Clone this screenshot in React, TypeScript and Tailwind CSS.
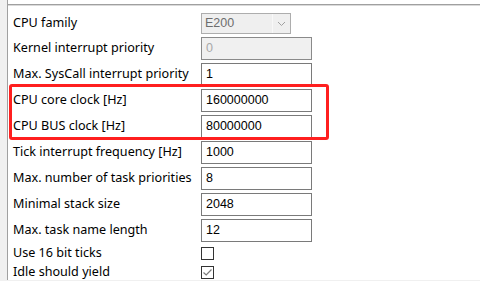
import React from "react";

const labelFont = { fontFamily: '"Noto Sans", "Liberation Sans", sans-serif' };
const inputFont = { fontFamily: '"Liberation Sans", Arial, sans-serif' };

function Row({ label, children, h = "h-[23px]" }: { label: string; children: React.ReactNode; h?: string }) {
  return (
    <div className={`flex items-center shrink-0 ${h}`}>
      <div className="w-[188px] shrink-0 text-[12.6px] leading-none text-black whitespace-nowrap" style={labelFont}>
        {label}
      </div>
      {children}
    </div>
  );
}

function Input({ value, disabled }: { value: string; disabled?: boolean }) {
  return (
    <div
      className={`w-[111px] h-[23px] border flex items-center pl-[4px] text-[12.5px] leading-none ${
        disabled ? "bg-[#f0f0f0] text-[#a8a8a8] border-[#8a8a8a]" : "bg-white text-black border-[#7a7a7a]"
      }`}
      style={inputFont}
    >
      {value}
    </div>
  );
}

function Check({ checked }: { checked?: boolean }) {
  return (
    <div className="w-[13px] h-[13px] border border-[#333333] bg-white flex items-center justify-center">
      {checked && (
        <svg width="11" height="11" viewBox="0 0 11 11">
          <path d="M1.5 5.5 L4.2 8 L9.5 2.5" fill="none" stroke="#7a7a7a" strokeWidth="1.2" />
        </svg>
      )}
    </div>
  );
}

export default function App() {
  return (
    <div className="w-[480px] h-[281px] bg-white flex flex-col overflow-hidden">
      <div className="flex h-[280px] shrink-0 overflow-hidden">
        <div className="w-[8px] shrink-0 bg-[#f0f0f0] border-r border-[#a0a0a0]" />
        <div className="flex-1 flex flex-col relative">
          <div className="h-[4px] shrink-0 bg-white" />
          <div className="h-[1px] shrink-0 bg-[#a0a0a0]" />
          <div className="h-[1px] shrink-0 bg-[#dadada]" />
          <div className="flex flex-col shrink-0 pl-[5px] pt-[7px]">
            <div className="flex flex-col gap-[3px]">
              <Row label="CPU family" h="h-[21px]">
                <div className="w-[90px] h-[21px] border border-[#adadad] bg-[#efefef] flex" style={inputFont}>
                  <div className="flex-1 flex items-center pl-[3px] text-[12.5px] leading-none text-[#6d6d6d] border-r border-[#f8f8f8]">
                    E200
                  </div>
                  <div className="w-[17px] flex items-center justify-center">
                    <svg width="9" height="6" viewBox="0 0 9 6">
                      <path d="M1 1 L4.5 4.5 L8 1" fill="none" stroke="#a0a0a0" strokeWidth="1" />
                    </svg>
                  </div>
                </div>
              </Row>
              <Row label="Kernel interrupt priority">
                <Input value="0" disabled />
              </Row>
              <Row label="Max. SysCall interrupt priority">
                <Input value="1" />
              </Row>
              <Row label="CPU core clock [Hz]">
                <Input value="160000000" />
              </Row>
              <Row label="CPU BUS clock [Hz]">
                <Input value="80000000" />
              </Row>
              <Row label="Tick interrupt frequency [Hz]">
                <Input value="1000" />
              </Row>
              <Row label="Max. number of task priorities">
                <Input value="8" />
              </Row>
              <Row label="Minimal stack size">
                <Input value="2048" />
              </Row>
              <Row label="Max. task name length">
                <Input value="12" />
              </Row>
            </div>
            <div className="flex flex-col mt-[2px]">
              <Row label="Use 16 bit ticks" h="h-[19px]">
                <Check />
              </Row>
              <Row label="Idle should yield" h="h-[19px]">
                <Check checked />
              </Row>
            </div>
          </div>
          <div className="absolute left-[1px] top-[84px] w-[320px] h-[56px] border-[3px] border-[#ff1f1f] rounded-[3px]" />
        </div>
      </div>
      <div className="h-[1px] shrink-0 bg-[#f0f0f0]" />
    </div>
  );
}
